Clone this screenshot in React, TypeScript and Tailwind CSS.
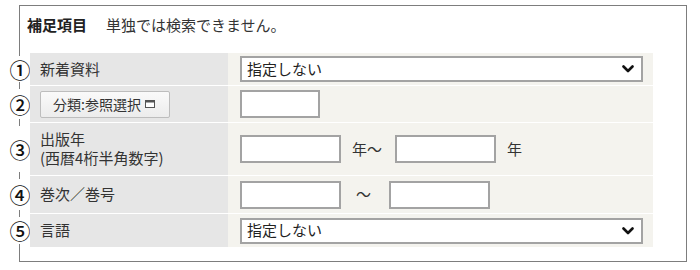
import React from "react";

const FONT = { fontFamily: '"Noto Sans CJK JP", "Noto Sans", sans-serif' };

function Chevron() {
  return (
    <svg width="12" height="8" viewBox="0 0 12 8" className="shrink-0">
      <path d="M1.5 1.5 L6 6 L10.5 1.5" fill="none" stroke="#111" strokeWidth="2.6" strokeLinecap="round" strokeLinejoin="round" />
    </svg>
  );
}

function Select() {
  return (
    <div className="w-[403px] h-[26px] bg-white border-2 border-[#a3a3a3] flex items-center justify-between pl-[5px] pr-[7px] text-[15px] text-[#222]">
      <span>指定しない</span>
      <Chevron />
    </div>
  );
}

function Input({ w }: { w: string }) {
  return <div className={`${w} h-[28px] bg-white border-2 border-[#a3a3a3]`} />;
}

function Num({ n }: { n: string }) {
  return (
    <div className="-ml-[20px] w-[20px] self-stretch my-[3px] bg-white flex items-center justify-center text-[21px] font-medium text-[#111] leading-none">
      {n}
    </div>
  );
}

function Row({ n, h, label, children }: { n: string; h: string; label: React.ReactNode; children: React.ReactNode }) {
  return (
    <div className={`flex ${h}`}>
      <Num n={n} />
      <div className="w-[198px] bg-[#e6e6e6] flex items-center pl-[10px] text-[15px] text-[#333]">{label}</div>
      <div className="flex-1 bg-[#f4f3ee] flex items-center pl-[12px]">{children}</div>
    </div>
  );
}

export default function App() {
  return (
    <div className="w-[700px] h-[270px] bg-white pt-[5px] pl-[19px]" style={FONT}>
      <div className="w-[668px] h-[257px] border border-[#7d7d7d]">
        <div className="pt-[9px] pl-[7px] leading-[20px] text-[15px] text-[#222] flex">
          <span className="font-bold">補足項目</span>
          <span className="ml-[19px] text-[#333]">単独では検索できません。</span>
        </div>
        <div className="mt-[18px] ml-[10px] w-[623px] flex flex-col gap-px">
          <Row n="①" h="h-[32px]" label="新着資料">
            <Select />
          </Row>
          <Row
            n="②"
            h="h-[36px]"
            label={
              <div className="h-[27px] w-[130px] border border-[#bdbdbd] rounded-[2px] bg-gradient-to-b from-[#fafafa] to-[#ececec] flex items-center pl-[12px] text-[14px] text-[#333]">
                <span>分類:参照選択</span>
                <svg width="10" height="8" viewBox="0 0 10 8" className="ml-[4px]">
                  <rect x="0.5" y="0.5" width="9" height="7" fill="#fff" stroke="#555" />
                  <rect x="0.5" y="0.5" width="9" height="2" fill="#555" />
                </svg>
              </div>
            }
          >
            <Input w="w-[80px]" />
          </Row>
          <Row
            n="③"
            h="h-[52px]"
            label={
              <div className="leading-[19px] -mt-[2px]">
                <div>出版年</div>
                <div>(西暦4桁半角数字)</div>
              </div>
            }
          >
            <Input w="w-[101px]" />
            <span className="ml-[11px] text-[15px] text-[#333]">年～</span>
            <div className="ml-[13px]">
              <Input w="w-[101px]" />
            </div>
            <span className="ml-[11px] text-[15px] text-[#333]">年</span>
          </Row>
          <Row n="④" h="h-[37px]" label="巻次／巻号">
            <Input w="w-[101px]" />
            <span className="ml-[15px] text-[15px] text-[#333]">～</span>
            <div className="ml-[18px]">
              <Input w="w-[101px]" />
            </div>
          </Row>
          <Row n="⑤" h="h-[33px]" label="言語">
            <Select />
          </Row>
        </div>
      </div>
    </div>
  );
}
